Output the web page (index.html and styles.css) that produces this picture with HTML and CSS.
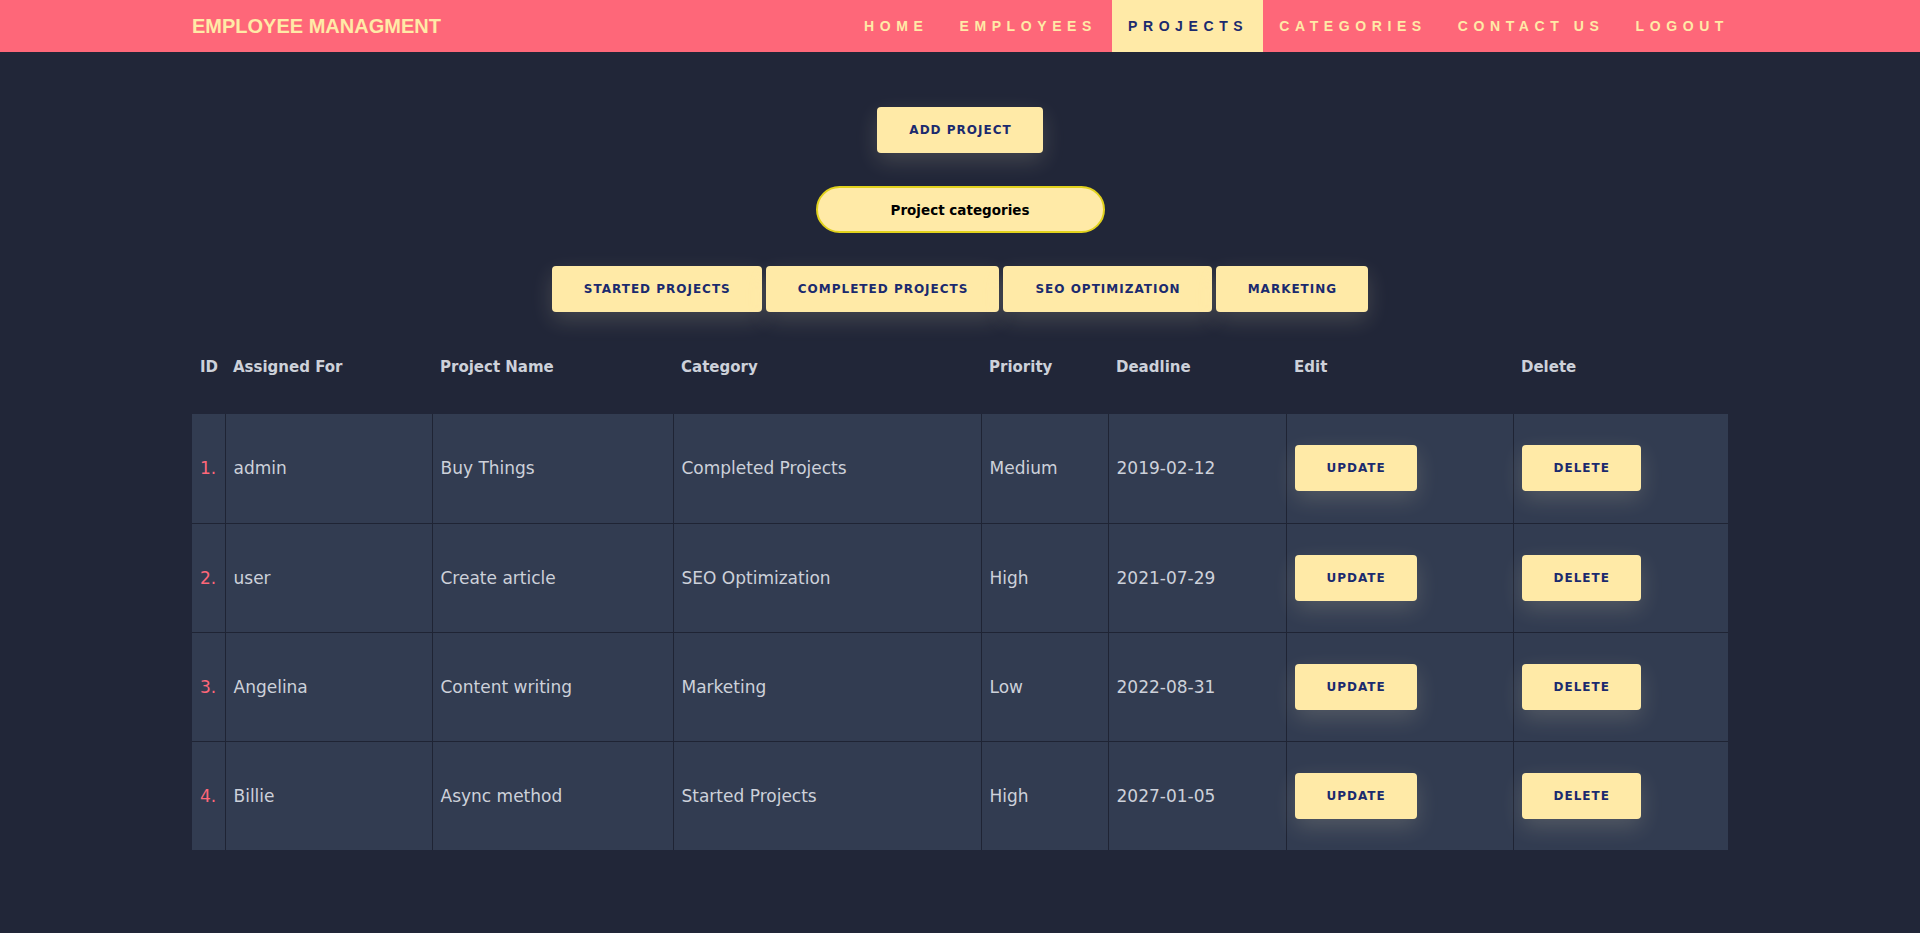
FILE: index.html
```html
<!DOCTYPE html>
<html lang="en">
<head>
<meta charset="utf-8">
<title>Employee Managment - Projects</title>
<link rel="stylesheet" href="styles.css">
</head>
<body>
<header class="topbar">
  <div class="topbar-inner">
    <a class="logo" href="#">EMPLOYEE MANAGMENT</a>
    <nav class="nav">
      <a class="nav-item" href="#">HOME</a>
      <a class="nav-item" href="#">EMPLOYEES</a>
      <a class="nav-item active" href="#">PROJECTS</a>
      <a class="nav-item" href="#">CATEGORIES</a>
      <a class="nav-item" href="#">CONTACT US</a>
      <a class="nav-item" href="#">LOGOUT</a>
    </nav>
  </div>
</header>

<main class="content">
  <div class="center-row">
    <button class="btn">ADD PROJECT</button>
  </div>
  <div class="center-row pill-row">
    <div class="pill">Project categories</div>
  </div>
  <div class="center-row cat-row">
    <button class="btn">STARTED PROJECTS</button>
    <button class="btn">COMPLETED PROJECTS</button>
    <button class="btn">SEO OPTIMIZATION</button>
    <button class="btn">MARKETING</button>
  </div>

  <table class="projects">
    <colgroup>
      <col class="c-id">
      <col class="c-assigned">
      <col class="c-name">
      <col class="c-cat">
      <col class="c-prio">
      <col class="c-dead">
      <col class="c-edit">
      <col class="c-del">
    </colgroup>
    <thead>
      <tr>
        <th>ID</th>
        <th>Assigned For</th>
        <th>Project Name</th>
        <th>Category</th>
        <th>Priority</th>
        <th>Deadline</th>
        <th>Edit</th>
        <th>Delete</th>
      </tr>
    </thead>
    <tbody>
      <tr>
        <td class="num">1.</td>
        <td>admin</td>
        <td>Buy Things</td>
        <td>Completed Projects</td>
        <td>Medium</td>
        <td>2019-02-12</td>
        <td><button class="btn">UPDATE</button></td>
        <td><button class="btn">DELETE</button></td>
      </tr>
      <tr>
        <td class="num">2.</td>
        <td>user</td>
        <td>Create article</td>
        <td>SEO Optimization</td>
        <td>High</td>
        <td>2021-07-29</td>
        <td><button class="btn">UPDATE</button></td>
        <td><button class="btn">DELETE</button></td>
      </tr>
      <tr>
        <td class="num">3.</td>
        <td>Angelina</td>
        <td>Content writing</td>
        <td>Marketing</td>
        <td>Low</td>
        <td>2022-08-31</td>
        <td><button class="btn">UPDATE</button></td>
        <td><button class="btn">DELETE</button></td>
      </tr>
      <tr>
        <td class="num">4.</td>
        <td>Billie</td>
        <td>Async method</td>
        <td>Started Projects</td>
        <td>High</td>
        <td>2027-01-05</td>
        <td><button class="btn">UPDATE</button></td>
        <td><button class="btn">DELETE</button></td>
      </tr>
    </tbody>
  </table>
</main>
</body>
</html>
```

FILE: styles.css
```css
* { box-sizing: border-box; }

html, body {
  margin: 0;
  padding: 0;
}

body {
  background: #212638;
  font-family: "DejaVu Sans", "Open Sans", sans-serif;
  color: #cdd1da;
  min-height: 933px;
}

/* ---------- top bar ---------- */
.topbar {
  background: #fe6779;
  height: 52px;
}

.topbar-inner {
  height: 100%;
  display: flex;
  align-items: stretch;
  justify-content: space-between;
  padding: 0 176px 0 192px;
}

.logo {
  display: flex;
  align-items: center;
  font-family: "Liberation Sans", Arial, sans-serif;
  font-weight: bold;
  font-size: 20px;
  color: #ffeaa7;
  text-decoration: none;
}

.nav {
  display: flex;
  align-items: stretch;
}

.nav-item {
  display: flex;
  align-items: center;
  padding: 0 15px 0 16px;
  font-family: "Liberation Sans", Arial, sans-serif;
  font-weight: bold;
  font-size: 14px;
  letter-spacing: 5.6px;
  color: #ffeaa7;
  text-decoration: none;
}

.nav-item.active {
  background: #ffeaa7;
  color: #1b2a6e;
}

/* ---------- content ---------- */
.content {
  padding-top: 55px;
}

.center-row {
  display: flex;
  justify-content: center;
}

.btn {
  font-family: "DejaVu Sans", sans-serif;
  font-weight: bold;
  font-size: 12px;
  line-height: 16px;
  letter-spacing: 1px;
  color: #1b2a6e;
  background: #ffeaa7;
  border: none;
  border-radius: 4px;
  padding: 15px 31px 15px 32px;
  box-shadow: 0 8px 22px rgba(255, 240, 200, 0.16);
  cursor: pointer;
}

.pill-row {
  margin-top: 33px;
}

.pill {
  width: 289px;
  height: 47px;
  border: 2px solid #e2d21c;
  border-radius: 24px;
  background: #ffeaa7;
  color: #000;
  font-weight: bold;
  font-size: 13.5px;
  display: flex;
  align-items: center;
  justify-content: center;
}

.cat-row {
  margin-top: 33px;
  gap: 4px;
}

/* ---------- table ---------- */
.projects {
  width: 1536px;
  margin: 35px auto 0;
  border-collapse: collapse;
  table-layout: fixed;
}

.c-id { width: 33px; }
.c-assigned { width: 207px; }
.c-name { width: 241px; }
.c-cat { width: 308px; }
.c-prio { width: 127px; }
.c-dead { width: 178px; }
.c-edit { width: 227px; }
.c-del { width: 215px; }

.projects th {
  text-align: left;
  vertical-align: top;
  font-weight: bold;
  font-size: 15px;
  line-height: 24px;
  color: #cdd1da;
  padding: 8px 8px 35px;
}

.projects td {
  background: #323c51;
  border: 1px solid #1f2434;
  height: 109px;
  padding: 0 8px;
  font-size: 17px;
  color: #cdd1da;
  vertical-align: middle;
}

.projects tbody tr:first-child td { border-top: none; }
.projects tbody tr:last-child td { border-bottom: none; }
.projects td:first-child { border-left: none; }
.projects td:last-child { border-right: none; }

.projects td.num {
  color: #fe6779;
}
```
